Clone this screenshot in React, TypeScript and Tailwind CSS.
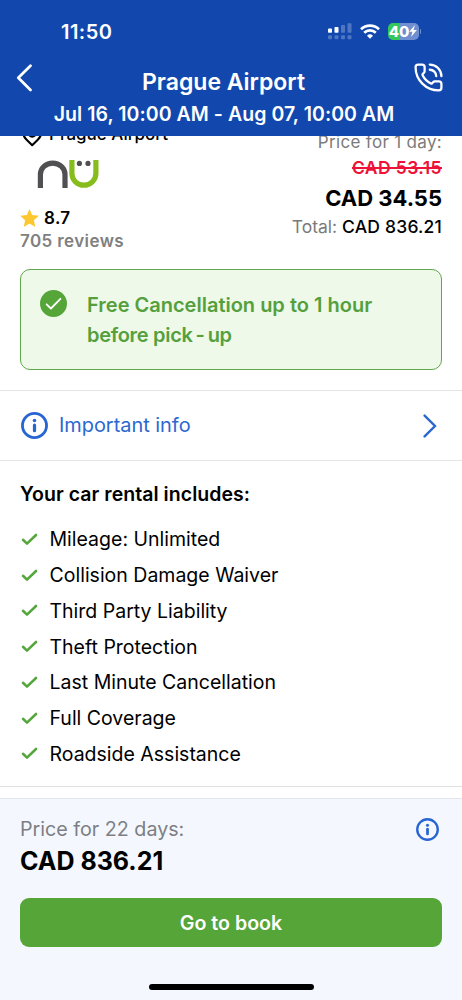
import { PhoneCall } from "lucide-react";

const included = [
  "Mileage: Unlimited",
  "Collision Damage Waiver",
  "Third Party Liability",
  "Theft Protection",
  "Last Minute Cancellation",
  "Full Coverage",
  "Roadside Assistance",
];

function SignalIcon() {
  return (
    <svg width="24" height="17" viewBox="0 0 24 17" fill="white">
      <rect x="0" y="5.5" width="4" height="4.3" rx="0.8" />
      <rect x="6.5" y="4" width="4" height="5.8" rx="0.8" />
      <g opacity="0.25">
        <rect x="13" y="2" width="4" height="7.8" rx="0.8" />
        <rect x="19.5" y="0.3" width="4" height="9.5" rx="0.8" />
        <rect x="0" y="12.2" width="4" height="4" rx="1.2" />
        <rect x="6.5" y="12.2" width="4" height="4" rx="1.2" />
        <rect x="13" y="12.2" width="4" height="4" rx="1.2" />
        <rect x="19.5" y="12.2" width="4" height="4" rx="1.2" />
      </g>
    </svg>
  );
}

function WifiIcon() {
  return (
    <svg width="20" height="15" viewBox="0 0 20 15" fill="none" stroke="white" strokeWidth="2.7">
      <path d="M1 5.3a13 13 0 0 1 18 0" />
      <path d="M4.2 8.7a8.4 8.4 0 0 1 11.6 0" />
      <path d="M10 14.8 7 11.8a4.3 4.3 0 0 1 6 0z" fill="white" stroke="none" />
    </svg>
  );
}

function Battery() {
  return (
    <div className="flex items-center gap-px">
      <div className="flex h-[17px] w-[31px] items-center justify-center rounded-[5px] bg-linear-to-r from-[#34c759] from-40% to-[#6f8fd0] to-40%">
        <span className="text-[15px] leading-none font-extrabold tracking-[-0.1px] text-white">40</span>
        <svg width="8" height="12" viewBox="0 0 7 11" fill="white">
          <path d="M5.3 0 0 6.2h3L1.7 11 7 4.6H4z" />
        </svg>
      </div>
      <span className="h-[5px] w-[1.5px] rounded-r-full bg-[#6f8fd0]" />
    </div>
  );
}

function InfoIcon({ className }: { className: string }) {
  return (
    <svg className={className} viewBox="0 0 26 26" fill="none">
      <circle cx="13" cy="13" r="11.6" stroke="#2765d3" strokeWidth="2.7" />
      <circle cx="13" cy="8.2" r="1.7" fill="#2765d3" />
      <path d="M13 12.6v5.4" stroke="#2765d3" strokeWidth="3.1" strokeLinecap="round" />
    </svg>
  );
}

function SupplierLogo() {
  return (
    <svg className="ml-[17px]" width="62" height="28" viewBox="0 0 62 28" fill="none" strokeWidth="5.2">
      <path d="M3.4 28V14.5a12.3 11.4 0 0 1 24.6 0V28" stroke="#505052" />
      <path d="M34.9 0v13.5a12 11.7 0 0 0 24 0V0" stroke="#86bd1c" />
      <circle cx="42.4" cy="3.4" r="2.6" fill="#505052" />
      <circle cx="51" cy="3.4" r="2.6" fill="#505052" />
    </svg>
  );
}

export default function App() {
  return (
    <div className="flex h-[1000px] w-[462px] flex-col overflow-hidden bg-white font-['Inter',sans-serif] text-black">
      <header className="z-10 h-[136px] shrink-0 bg-[#1248ae] text-white">
        <div className="flex h-[62px] items-center justify-between pr-[41px] pl-[61px]">
          <span className="pt-px text-[20px] font-semibold tracking-[0.45px]">11:50</span>
          <div className="flex items-center">
            <SignalIcon />
            <span className="w-2" />
            <WifiIcon />
            <span className="w-2" />
            <Battery />
          </div>
        </div>
        <div className="flex h-[38px] justify-between pr-[18px] pl-[16px]">
          <svg className="mt-0.5" width="18" height="28" viewBox="0 0 18 28" fill="none" stroke="white" strokeWidth="2.7" strokeLinecap="round" strokeLinejoin="round">
            <path d="M14.5 1.7 2.3 13.7 14.5 26" />
          </svg>
          <h1 className="pt-px text-[23px] leading-[38px] font-semibold">Prague Airport</h1>
          <PhoneCall className="text-white" size={31} strokeWidth={1.75} />
        </div>
        <p className="pr-[14px] text-center text-[19.5px] leading-[28px] font-semibold tracking-[0.06px]">
          Jul 16, 10:00 AM - Aug 07, 10:00 AM
        </p>
      </header>

      <main className="flex min-h-0 flex-1 flex-col">
        <section className="-mt-3 flex h-[145px] shrink-0 justify-between px-5">
          <div className="flex flex-col">
            <div className="flex h-[22px] items-center">
              <svg className="ml-0.5" width="22" height="24" viewBox="0 0 22 24" fill="none" stroke="black" strokeWidth="2.1">
                <path d="M10.2 22.2 4.6 16.8C-1.4 11 1.6 1.1 10.2 1.1s11.6 9.9 5.6 15.7z" strokeLinejoin="round" />
                <circle cx="10.2" cy="10" r="3.7" />
              </svg>
              <span className="ml-[5px] text-[17px] font-medium">Prague Airport</span>
            </div>
            <div className="mt-[14px] mb-[19px]">
              <SupplierLogo />
            </div>
            <div className="flex h-[22px] items-center">
              <svg width="19" height="18" viewBox="0 0 19 18" fill="#fdc82f">
                <path d="m9.5 0 2.7 6.1 6.6.7-4.9 4.5 1.4 6.6-5.8-3.4-5.8 3.4 1.4-6.6L.2 6.8l6.6-.7z" />
              </svg>
              <span className="ml-[5px] pt-0.5 text-[17px] font-semibold tracking-[0.4px]">8.7</span>
            </div>
            <span className="text-[17px] leading-[24px] font-semibold tracking-[0.4px] text-[#808080]">705 reviews</span>
          </div>
          <div className="flex flex-col items-end pt-[5px]">
            <span className="text-[17px] leading-[26px] tracking-[0.32px] text-[#7b7b7b]">Price for 1 day:</span>
            <span className="text-[17.5px] leading-[26px] font-semibold tracking-[0.4px] text-[#ee1239] line-through decoration-[1.5px]">CAD 53.15</span>
            <span className="text-[22px] leading-[34px] font-bold">CAD 34.55</span>
            <span className="text-[17.5px] leading-[24px] font-medium tracking-[0.2px]">
              <span className="font-normal tracking-normal text-[#7b7b7b]">Total: </span>CAD 836.21
            </span>
          </div>
        </section>

        <section className="mx-5 flex h-[101px] shrink-0 rounded-[10px] border-[1.5px] border-[#60a84b] bg-[#eef9e9] pt-5 pl-5">
          <svg className="-ml-px shrink-0" width="27" height="27" viewBox="0 0 27 27" fill="none">
            <circle cx="13.5" cy="13.5" r="13.5" fill="#55a538" />
            <path d="m6.6 14.3 4.3 4.2 9.5-9.7" stroke="white" strokeWidth="1.8" strokeLinecap="round" strokeLinejoin="round" />
          </svg>
          <p className="ml-5 pt-px text-[20px] leading-[29.7px] font-semibold text-[#55a03c]">
            Free Cancellation up to 1 hour
            <br />
            <span className="tracking-[-0.3px]">before pick<span className="mx-[3px]">-</span>up</span>
          </p>
        </section>

        <section className="mt-5 flex h-[71px] shrink-0 items-center border-y border-[#e4e5e7] px-5">
          <InfoIcon className="ml-px size-[27px]" />
          <span className="ml-[11px] text-[19.9px] text-[#2b68d0]">Important info</span>
          <svg className="mr-[4px] ml-auto" width="16" height="24" viewBox="0 0 16 24" fill="none" stroke="#2b68d0" strokeWidth="2.4">
            <path d="M2.6 1.6 13 12 2.6 22.4" strokeLinecap="round" />
          </svg>
        </section>

        <section className="px-5 pt-[18px]">
          <h2 className="text-[19.5px] leading-[30px] font-semibold tracking-[0.05px]">Your car rental includes:</h2>
          <ul className="mt-[12.5px]">
            {included.map((label) => (
              <li key={label} className="flex h-[35.75px] items-center">
                <svg className="mb-px" width="20" height="14" viewBox="0 0 20 14" fill="none" stroke="#55a63c" strokeWidth="2.6" strokeLinecap="round" strokeLinejoin="round">
                  <path d="M3 7.8 7 11.6 16 3" />
                </svg>
                <span className="ml-[9.5px] pt-px text-[19.5px]">{label}</span>
              </li>
            ))}
          </ul>
        </section>
        <div className="mt-[14px] h-px shrink-0 bg-[#dfe1e4]" />
      </main>

      <footer className="flex h-[202px] shrink-0 flex-col border-t border-[#e3e5ec] bg-[#f4f7fe] px-5">
        <div className="mt-[17px] flex items-start justify-between">
          <div className="flex flex-col">
            <span className="text-[19.7px] leading-[26px] text-[#7d7f84]">Price for 22 days:</span>
            <span className="pt-px text-[25px] leading-[37px] font-bold">CAD 836.21</span>
          </div>
          <InfoIcon className="mt-[2px] mr-[3px] size-[23px]" />
        </div>
        <button className="mt-[18px] h-[49px] w-full rounded-[9px] bg-[#55a539] pt-0.5 text-[19.6px] font-semibold text-white">Go to book</button>
        <div className="mx-auto mt-[37px] h-[6px] w-[165px] rounded-full bg-black" />
      </footer>
    </div>
  );
}
